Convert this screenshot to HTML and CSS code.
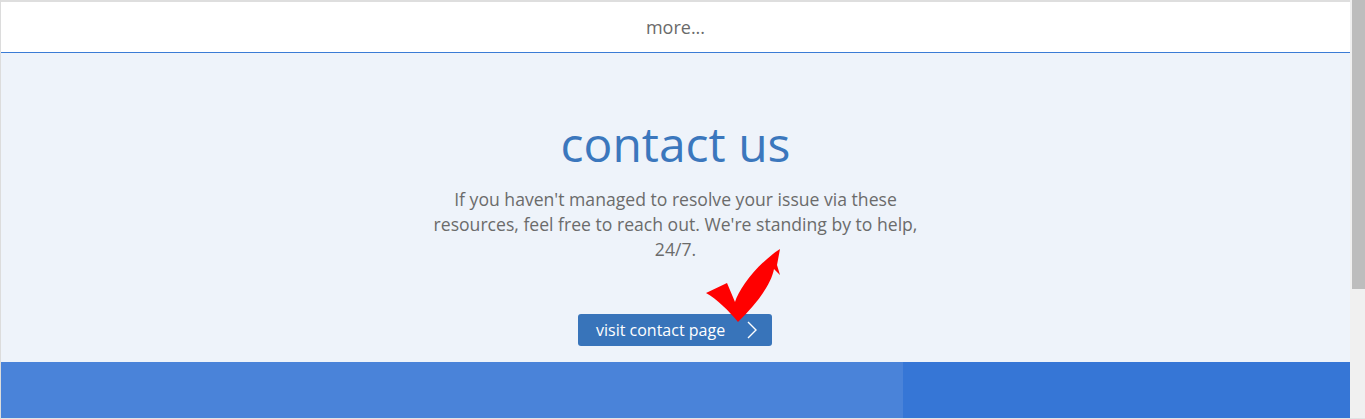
FILE: index.html
```html
<!DOCTYPE html>
<html lang="en">
<head>
  <meta charset="UTF-8">
  <title>Contact us</title>
  <meta name="viewport" content="width=device-width, initial-scale=1.0">
  <link rel="stylesheet" href="styles.css">
</head>
<body>

<div class="window">
  <div class="frame">

    <!-- More link -->
    <div class="more-bar">
      <a class="more-link" href="#">more...</a>
    </div>

    <!-- Contact Section -->
    <section class="contact">
      <h1 class="contact-title">contact us</h1>
      <p class="contact-text">If you haven't managed to resolve your issue via these resources, feel free to reach out. We're standing by to help, 24/7.</p>
      <div class="btn-wrap">
        <a class="contact-btn" href="#">
          <span>visit contact page</span>
          <svg class="chevron" width="12" height="18" viewBox="0 0 12 18">
            <polyline points="2,1 10,9 2,17" fill="none" stroke="#fff" stroke-width="1.4"/>
          </svg>
        </a>
        <!-- annotation -->
        <svg class="check" width="76" height="78" viewBox="0 0 76 78">
          <path d="M1 46 L22 36 L30 55 C34 42 52 17 75 2 L72 18 L75 28 L69 22 C66 38 52 56 33 75 C24 64 12 52 1 46 Z" fill="#ff0000"/>
        </svg>
      </div>
    </section>

    <!-- Footer band -->
    <div class="band">
      <div class="band-left"></div>
      <div class="band-right"></div>
    </div>
    <div class="band-edge"></div>

  </div>

  <div class="scrollbar">
    <div class="thumb"></div>
  </div>
</div>

</body>
</html>
```

FILE: styles.css
```css
* {
  margin: 0;
  padding: 0;
  box-sizing: border-box;
  font-family: "Open Sans", Arial, sans-serif;
}

body {
  background: #ffffff;
  height: 419px;
  overflow: hidden;
}

.window {
  display: flex;
  height: 419px;
}

.frame {
  width: 1350px;
  border-left: 1px solid #dcdcdc;
  display: flex;
  flex-direction: column;
}

.more-bar {
  height: 53px;
  border-top: 2px solid #dedede;
  border-bottom: 1px solid #3a7bd5;
  background: #ffffff;
  display: flex;
  justify-content: center;
  padding-top: 13px;
}

.more-link {
  color: #6a6a6a;
  font-size: 18px;
  line-height: 24px;
  text-decoration: none;
}

.contact {
  height: 309px;
  background: #eef3fa;
  display: flex;
  flex-direction: column;
  align-items: center;
  padding-top: 62px;
}

.contact-title {
  color: #3b77bd;
  font-size: 48px;
  font-weight: normal;
  line-height: 58px;
}

.contact-text {
  width: 500px;
  margin-top: 14px;
  color: #6b6b6b;
  font-size: 17.6px;
  line-height: 25px;
  text-align: center;
}

.btn-wrap {
  position: relative;
  margin-top: 52px;
  margin-right: 1px;
}

.contact-btn {
  display: flex;
  align-items: center;
  justify-content: space-between;
  width: 194px;
  height: 32px;
  padding: 0 14px 0 18px;
  background: #3874ba;
  border-radius: 3px;
  color: #ffffff;
  font-size: 16px;
  text-decoration: none;
}

.chevron {
  display: block;
}

.check {
  position: absolute;
  left: 127px;
  top: -67px;
}

.band {
  height: 56px;
  display: flex;
}

.band-left {
  width: 902px;
  background: #4a83d9;
}

.band-right {
  flex: 1;
  background: #3676d6;
}

.band-edge {
  height: 1px;
  background: #e4e4e4;
}

.scrollbar {
  width: 15px;
  background: #f0f0f0;
  padding-left: 2px;
  border-bottom: 1px solid #e4e4e4;
}

.thumb {
  height: 289px;
  background: #bdbdbd;
}
```
